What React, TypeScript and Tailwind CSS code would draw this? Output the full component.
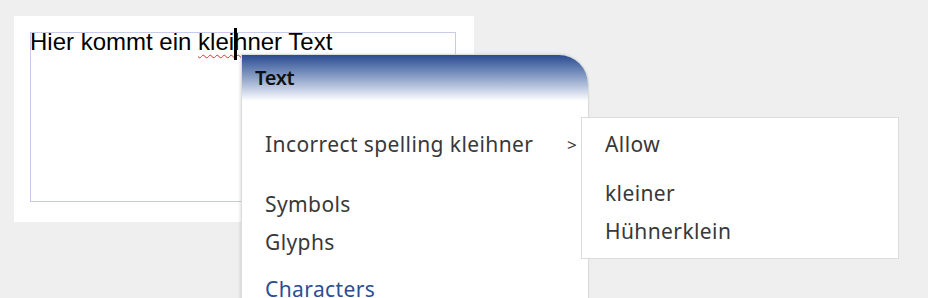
const menuFont = { fontFamily: '"Noto Sans", "Open Sans", sans-serif' };

export default function App() {
  return (
    <div className="relative w-[928px] h-[298px] overflow-hidden bg-[#efefef]">
      {/* Dokument-Fläche */}
      <div className="absolute left-[14px] top-[16px] w-[460px] h-[206px] bg-white">
        <div className="ml-[16px] mt-[16px] w-[426px] h-[170px] border border-[#c9c9ea]">
          <p
            className="-ml-[1px] text-[24px] leading-[18px] text-black"
            style={{ fontFamily: '"Liberation Sans", Arial, sans-serif' }}
          >
            Hier kommt ein{' '}
            <span className="underline decoration-wavy decoration-[#e03030] decoration-1 underline-offset-[4px]">
              kleihner
            </span>{' '}
            Text
          </p>
        </div>
      </div>

      {/* I-Beam Cursor */}
      <div className="absolute left-[234px] top-[28px] w-[3px] h-[32px] bg-black" />

      {/* Kontextmenü */}
      <div
        className="absolute left-[241px] top-[54px] w-[348px] h-[270px] bg-white border border-[#dcdcdc] rounded-tr-[30px] shadow-[-1px_0_3px_rgba(0,0,0,0.12)] overflow-hidden"
        style={menuFont}
      >
        <div className="h-[46px] bg-gradient-to-b from-[#2a4b90] to-white pl-[13px] pt-[9px] text-[20px] leading-[28px] font-semibold tracking-[-0.3px] text-[#111]">
          Text
        </div>
        <div className="flex flex-col pt-[25px] text-[21px] tracking-[0.4px] text-[#383838]">
          <div className="flex items-center justify-between h-[38px] pl-[23px] pr-[11px]">
            <span>Incorrect spelling kleihner</span>
            <span className="text-[17px]">&gt;</span>
          </div>
          <div className="mt-[22px] flex items-center h-[38px] pl-[23px]">Symbols</div>
          <div className="flex items-center h-[38px] pl-[23px]">Glyphs</div>
          <div className="mt-[9px] flex items-center h-[38px] pl-[23px] text-[#2b4e94]">Characters</div>
        </div>
      </div>

      {/* Untermenü */}
      <div
        className="absolute left-[581px] top-[117px] w-[318px] h-[142px] flex flex-col bg-white border border-[#dcdcdc] py-[8px] text-[21px] tracking-[0.4px] text-[#383838]"
        style={menuFont}
      >
        <div className="flex items-center h-[38px] pl-[23px]">Allow</div>
        <div className="mt-[12px] flex items-center h-[38px] pl-[23px]">kleiner</div>
        <div className="flex items-center h-[38px] pl-[23px]">Hühnerklein</div>
      </div>
    </div>
  );
}
